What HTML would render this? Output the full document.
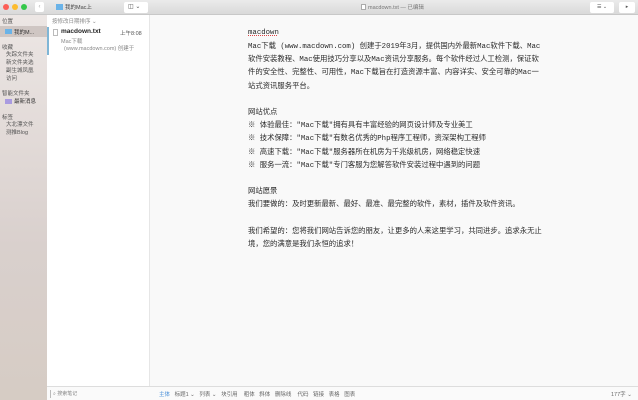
<!DOCTYPE html><html><head><meta charset="utf-8"><style>
*{margin:0;padding:0;box-sizing:border-box}
body{width:638px;height:400px;overflow:hidden;font-family:"Liberation Sans","Noto Sans CJK SC",sans-serif;background:#f8f8f8;position:relative;font-size:7px;color:#333}
.tb{position:absolute;left:0;top:0;width:638px;height:15px;background:linear-gradient(#ebebeb,#d9d9d9);border-bottom:1px solid #c8c8c8}
.dot{position:absolute;top:4px;width:6px;height:6px;border-radius:50%}
.side{position:absolute;left:0;top:15px;width:47px;height:385px;background:linear-gradient(#ece6e4,#d9d0cd 60%,#d6ccc4)}
.list{position:absolute;left:47px;top:15px;width:103px;height:371px;background:#fff;border-right:1px solid #e6e6e6}
.ed{position:absolute;left:150px;top:15px;width:488px;height:371px;background:#f9f9f9}
.status{position:absolute;left:47px;top:386px;width:591px;height:14px;background:#fafafa;border-top:1px solid #ddd;font-size:5.5px;color:#666}
.t{position:absolute;white-space:nowrap}
.s{font-size:5.5px;color:#555}
.txt{position:absolute;font-family:"Liberation Mono","Noto Sans CJK SC",monospace;font-size:7.35px;color:#2a2a2a;white-space:nowrap}
</style></head><body>
<div class="tb">
<div class="dot" style="left:3px;background:#fc5f57"></div>
<div class="dot" style="left:12px;background:#fdbc2e"></div>
<div class="dot" style="left:21px;background:#34c84a"></div>
<div class="t" style="left:35px;top:2px;width:9px;height:10px;background:#fff;border-radius:2px;font-size:6px;color:#aaa;text-align:center;line-height:10px">‹</div>
<div class="t" style="left:56px;top:4px;width:7px;height:6px;background:#6ab3e8"></div>
<div class="t s" style="left:65px;top:3px;color:#444">我的Mac上</div>
<div class="t" style="left:124px;top:2px;width:24px;height:11px;background:#fff;border-radius:2px;font-size:6px;color:#555;padding-left:4px;line-height:11px">◫ ⌄</div>
<div class="t" style="left:361px;top:4px;width:5px;height:6px;background:#fff;border:1px solid #aaa"></div>
<div class="t s" style="left:368px;top:3px;color:#777">macdown.txt — 已编辑</div>
<div class="t" style="left:590px;top:2px;width:24px;height:11px;background:#fff;border-radius:2px;font-size:5px;color:#555;text-align:center;line-height:11px">☰ ⌄</div>
<div class="t" style="left:619px;top:2px;width:16px;height:11px;background:#fff;border-radius:2px;font-size:5px;color:#555;text-align:center;line-height:11px">▸</div>
</div>
<div class="side">
<div class="t s" style="left:2px;top:2px">位置</div>
<div class="t" style="left:0;top:11px;width:47px;height:11px;background:#cfc6c3"></div>
<div class="t" style="left:5px;top:14px;width:7px;height:5px;background:#6ab3e8"></div>
<div class="t s" style="left:14px;top:13px;color:#333">我的M...</div>
<div class="t s" style="left:2px;top:28px">收藏</div>
<div class="t s" style="left:6px;top:36px;line-height:8px">失踪文件夹<br>新文件夹选<br>副生城凤凰<br>访问</div>
<div class="t s" style="left:2px;top:74px">智能文件夹</div>
<div class="t" style="left:5px;top:84px;width:7px;height:5px;background:#a99be0"></div>
<div class="t s" style="left:14px;top:82px;color:#333">最新消息</div>
<div class="t s" style="left:2px;top:98px">标签</div>
<div class="t s" style="left:6px;top:106px;line-height:8px">大北漂文件<br>测推Blog</div>
</div>
<div class="list">
<div class="t s" style="left:5px;top:2px;color:#888">按修改日期排序 ⌄</div>
<div class="t" style="left:0;top:12px;width:2px;height:28px;background:#7fb6d6"></div>
<div class="t" style="left:6px;top:14px;width:5px;height:7px;border:1px solid #bbb"></div>
<div class="t" style="left:14px;top:13px;font-size:6.5px;color:#222;font-weight:bold">macdown.txt</div>
<div class="t s" style="left:73px;top:14px;color:#555">上午8:08</div>
<div class="t s" style="left:14px;top:22px;color:#888">Mac下载</div>
<div class="t s" style="left:17px;top:29px;color:#888">(www.macdown.com) 创建于</div>
</div>
<div class="ed">
<div class="txt" style="left:98px;top:14px;text-decoration:underline dotted #d44">macdown</div>
<div class="txt" style="left:98px;top:26px;line-height:13.2px">Mac下载 (www.macdown.com) 创建于2019年3月，提供国内外最新Mac软件下载、Mac<br>软件安装教程、Mac使用技巧分享以及Mac资讯分享服务。每个软件经过人工检测，保证软<br>件的安全性、完整性、可用性，Mac下载旨在打造资源丰富、内容详实、安全可靠的Mac一<br>站式资讯服务平台。<br><br>网站优点<br>※ 体验最佳："Mac下载"拥有具有丰富经验的网页设计师及专业美工<br>※ 技术保障："Mac下载"有数名优秀的Php程序工程师，资深架构工程师<br>※ 高速下载："Mac下载"服务器所在机房为千兆级机房，网络稳定快速<br>※ 服务一流："Mac下载"专门客服为您解答软件安装过程中遇到的问题<br><br>网站愿景<br>我们要做的：及时更新最新、最好、最准、最完整的软件，素材，插件及软件资讯。<br><br>我们希望的：您将我们网站告诉您的朋友，让更多的人来这里学习，共同进步。追求永无止<br>境，您的满意是我们永恒的追求！</div>
</div>
<div class="status">
<div class="t" style="left:3px;top:3px;width:60px;height:8px;border-left:1px solid #bbb;padding-left:2px;font-size:5px;color:#888">⌕ 搜索笔记</div>
<div class="t" style="left:112px;top:3px"><span style="color:#4a90d9">主体</span>&nbsp;&nbsp; 标题1 ⌄ &nbsp; 列表 ⌄ &nbsp; 块引用 &nbsp;&nbsp; 粗体 &nbsp; 斜体 &nbsp; 删除线 &nbsp;&nbsp; 代码 &nbsp; 链接 &nbsp; 表格 &nbsp; 图表</div>
<div class="t" style="left:564px;top:3px">177字 ⌄</div>
</div>
</body></html>
